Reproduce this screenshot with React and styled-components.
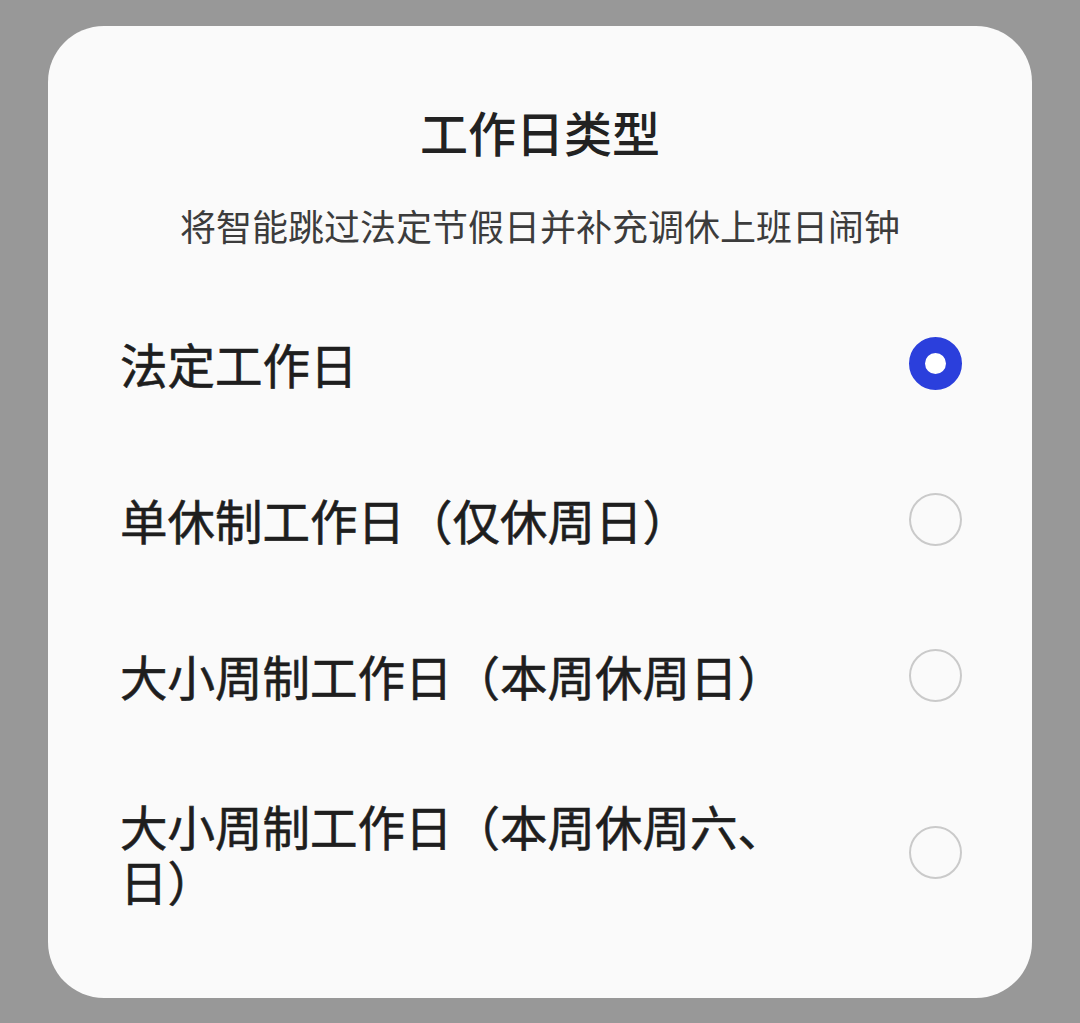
import styled, { createGlobalStyle } from 'styled-components'

const Global = createGlobalStyle`
    html, body {
        margin: 0;
        padding: 0;
        background: #989898;
        font-family: "Noto Sans CJK SC", "Noto Sans", sans-serif;
    }
`

const Page = styled.div`
    width: 1080px;
    height: 1023px;
    padding: 26px 48px 0;
    box-sizing: border-box;
`

const Card = styled.div`
    width: 984px;
    height: 972px;
    box-sizing: border-box;
    background: #fafafa;
    border-radius: 56px;
    padding: 75px 70px 32px 74px;
    display: flex;
    flex-direction: column;
`

const Title = styled.h1`
    margin: 0;
    text-align: center;
    font-size: 48px;
    line-height: 60px;
    font-weight: 500;
    color: #222;
    padding-right: 4px;
`

const Subtitle = styled.p`
    margin: 40px 0 37px;
    text-align: center;
    font-size: 36px;
    line-height: 48px;
    font-weight: 400;
    color: #3c3c3c;
    padding-right: 4px;
`

const Row = styled.div`
    display: flex;
    align-items: center;
    justify-content: space-between;
    padding: ${p => (p.$multi ? '44px' : '50px')} 0 51px;
`

const Label = styled.span`
    max-width: 690px;
    font-size: 47.5px;
    line-height: 55px;
    font-weight: 400;
    color: #1e1e1e;
    -webkit-text-stroke: 0.6px #1e1e1e;
    margin-left: -2px;
`

const Radio = styled.span`
    flex: none;
    width: 53px;
    height: 53px;
    box-sizing: border-box;
    border-radius: 50%;
    margin-top: ${p => (p.$multi ? '-2px' : '0')};
    border: ${p => (p.$checked ? '16px solid #2b3fdc' : '2.5px solid #cacaca')};
    background: ${p => (p.$checked ? '#fff' : 'transparent')};
`

const options = [
    { label: '法定工作日', checked: true },
    { label: '单休制工作日（仅休周日）' },
    { label: '大小周制工作日（本周休周日）' },
    { label: '大小周制工作日（本周休周六、日）', multi: true },
]

const App = () => {
    return (
        <Page>
            <Global />
            <Card>
                <Title>工作日类型</Title>
                <Subtitle>将智能跳过法定节假日并补充调休上班日闹钟</Subtitle>
                {options.map(o => (
                    <Row key={o.label} $multi={o.multi}>
                        <Label>{o.label}</Label>
                        <Radio $checked={o.checked} $multi={o.multi} />
                    </Row>
                ))}
            </Card>
        </Page>
    )
}

export default App
